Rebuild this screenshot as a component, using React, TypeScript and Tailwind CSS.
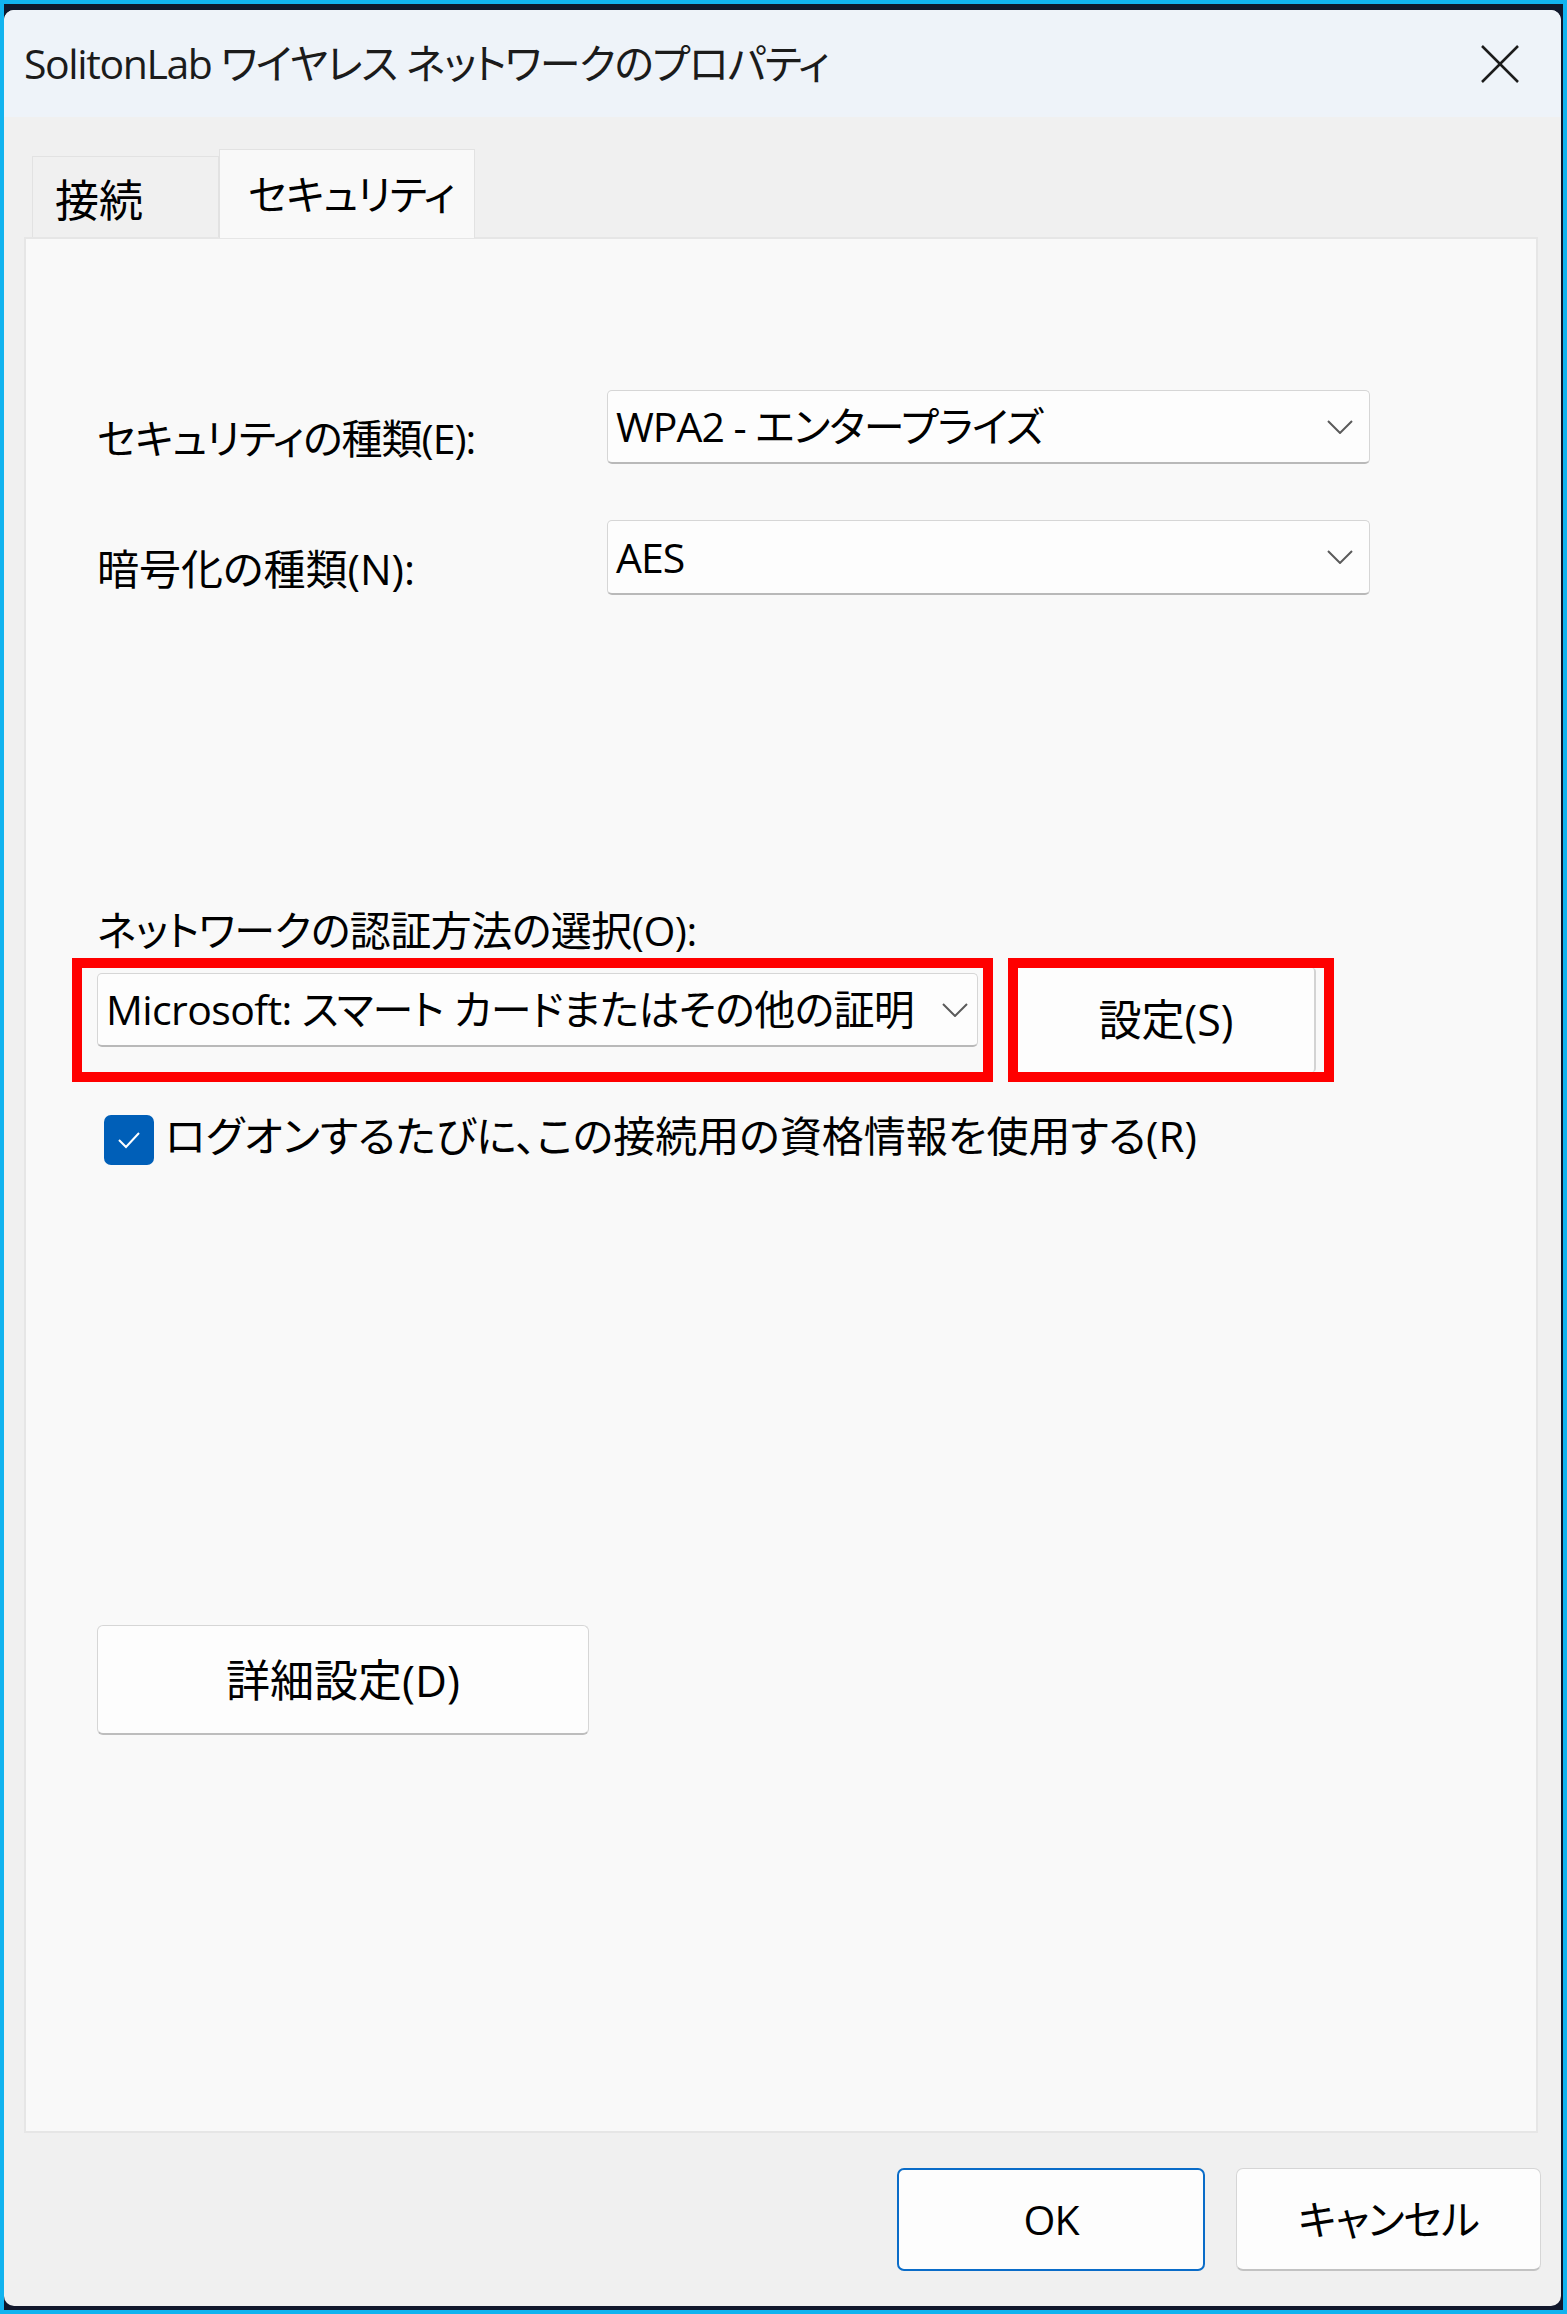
import React from "react";

function Chevron() {
  return (
    <svg width="26" height="14" viewBox="0 0 26 14" className="shrink-0">
      <polyline points="1,1 13,13 25,1" fill="none" stroke="#5b5b5b" strokeWidth="2" />
    </svg>
  );
}

function Select({ text, className }: { text: string; className: string }) {
  return (
    <div
      className={
        "flex items-center justify-between bg-[#fdfdfd] border border-[#d6d6d6] border-b-[#b9b9b9] border-b-2 rounded-[5px] pl-[8px] " +
        className
      }
    >
      <span className="whitespace-nowrap">{text}</span>
      <Chevron />
    </div>
  );
}

export default function App() {
  return (
    <div className="w-[1567px] h-[2314px] bg-[#12b3ef] p-[4px] font-['Open_Sans','Noto_Sans_CJK_JP',sans-serif] [font-feature-settings:'palt'] text-[41px] tracking-[-1px] leading-none text-black">
      <div className="h-full bg-[#10172b] pt-[6px] pb-[4px] pr-[2px]">
        <div className="h-full flex flex-col rounded-[10px] overflow-hidden bg-[#f0f0f0]">
          {/* Title bar */}
          <div className="h-[107px] shrink-0 bg-[#eef3f9] flex items-center justify-between pl-[20px] pr-[41px]">
            <span className="text-[#1b1b1b] whitespace-nowrap tracking-[-1.4px]">SolitonLab ワイヤレス ネットワークのプロパティ</span>
            <svg width="40" height="40" viewBox="0 0 40 40">
              <line x1="2" y1="2" x2="38" y2="38" stroke="#1b1b1b" strokeWidth="2.5" />
              <line x1="38" y1="2" x2="2" y2="38" stroke="#1b1b1b" strokeWidth="2.5" />
            </svg>
          </div>

          {/* Body */}
          <div className="flex-1 flex flex-col px-[20px] pt-[32px]">
            {/* Tabs */}
            <div className="flex items-end h-[88px] pl-[8px]">
              <div className="w-[187px] h-[81px] border border-b-0 border-[#e2e2e2] bg-[#f0f0f0] flex items-center pl-[22px] pt-[6px] text-[44px] tracking-normal">
                接続
              </div>
              <div className="w-[256px] h-[89px] -mb-px relative z-10 border border-b-0 border-[#e2e2e2] bg-[#f9f9f9] flex items-center pl-[28px]">
                セキュリティ
              </div>
            </div>

            {/* Panel */}
            <div className="w-[1514px] h-[1896px] border-2 border-[#e6e6e6] bg-[#f9f9f9] flex flex-col pl-[71px] pt-[151px]">
              <div className="flex items-center">
                <span className="w-[510px] mt-[22px] whitespace-nowrap">セキュリティの種類(E):</span>
                <Select text="WPA2 - エンタープライズ" className="w-[763px] h-[74px] pr-[16px]" />
              </div>
              <div className="flex items-center mt-[56px]">
                <span className="w-[510px] mt-[22px] whitespace-nowrap text-[42px] tracking-normal">暗号化の種類(N):</span>
                <Select text="AES" className="w-[763px] h-[75px] pr-[16px]" />
              </div>

              <div className="mt-[307px] h-[56px] flex items-center whitespace-nowrap tracking-[-0.5px]">
                ネットワークの認証方法の選択(O):
              </div>

              <div className="flex -ml-[25px] gap-[15px]">
                <div className="border-[10px] border-[#ff0000] pl-[15px] pt-[5px] pr-[5px] pb-[25px]">
                  <Select text="Microsoft: スマート カードまたはその他の証明" className="w-[881px] h-[74px] pr-[9px] tracking-[-0.6px]" />
                </div>
                <div className="border-[10px] border-[#ff0000] w-[326px] h-[124px] flex">
                  <div className="h-full w-[298px] bg-[#fdfdfd] border-r-2 border-[#d3d3d3] rounded-r-[4px] flex items-center justify-center pb-[2px] text-[43px] tracking-normal">
                    設定(S)
                  </div>
                </div>
              </div>

              <div className="flex items-center mt-[33px] ml-[7px] gap-[11px]">
                <div className="w-[50px] h-[50px] rounded-[7px] bg-[#005fb8] flex items-center justify-center shrink-0">
                  <svg width="26" height="20" viewBox="0 0 26 20">
                    <polyline points="3,10 10,17 23,3" fill="none" stroke="#ffffff" strokeWidth="2" />
                  </svg>
                </div>
                <span className="whitespace-nowrap -mt-[8px] text-[42px] tracking-normal">ログオンするたびに、この接続用の資格情報を使用する(R)</span>
              </div>

              <div className="mt-[460px] w-[492px] h-[110px] bg-[#fdfdfd] border border-[#d6d6d6] border-b-2 border-b-[#bdbdbd] rounded-[6px] flex items-center justify-center text-[44px] tracking-normal">
                詳細設定(D)
              </div>
            </div>

            {/* Footer */}
            <div className="flex justify-end gap-[31px] mt-[35px]">
              <div className="w-[308px] h-[103px] bg-[#fdfdfd] border-2 border-[#0a6cc8] rounded-[7px] flex items-center justify-center">
                OK
              </div>
              <div className="w-[305px] h-[103px] bg-[#fdfdfd] border border-[#d6d6d6] border-b-2 border-b-[#c2c2c2] rounded-[7px] flex items-center justify-center">
                キャンセル
              </div>
            </div>
          </div>
        </div>
      </div>
    </div>
  );
}
